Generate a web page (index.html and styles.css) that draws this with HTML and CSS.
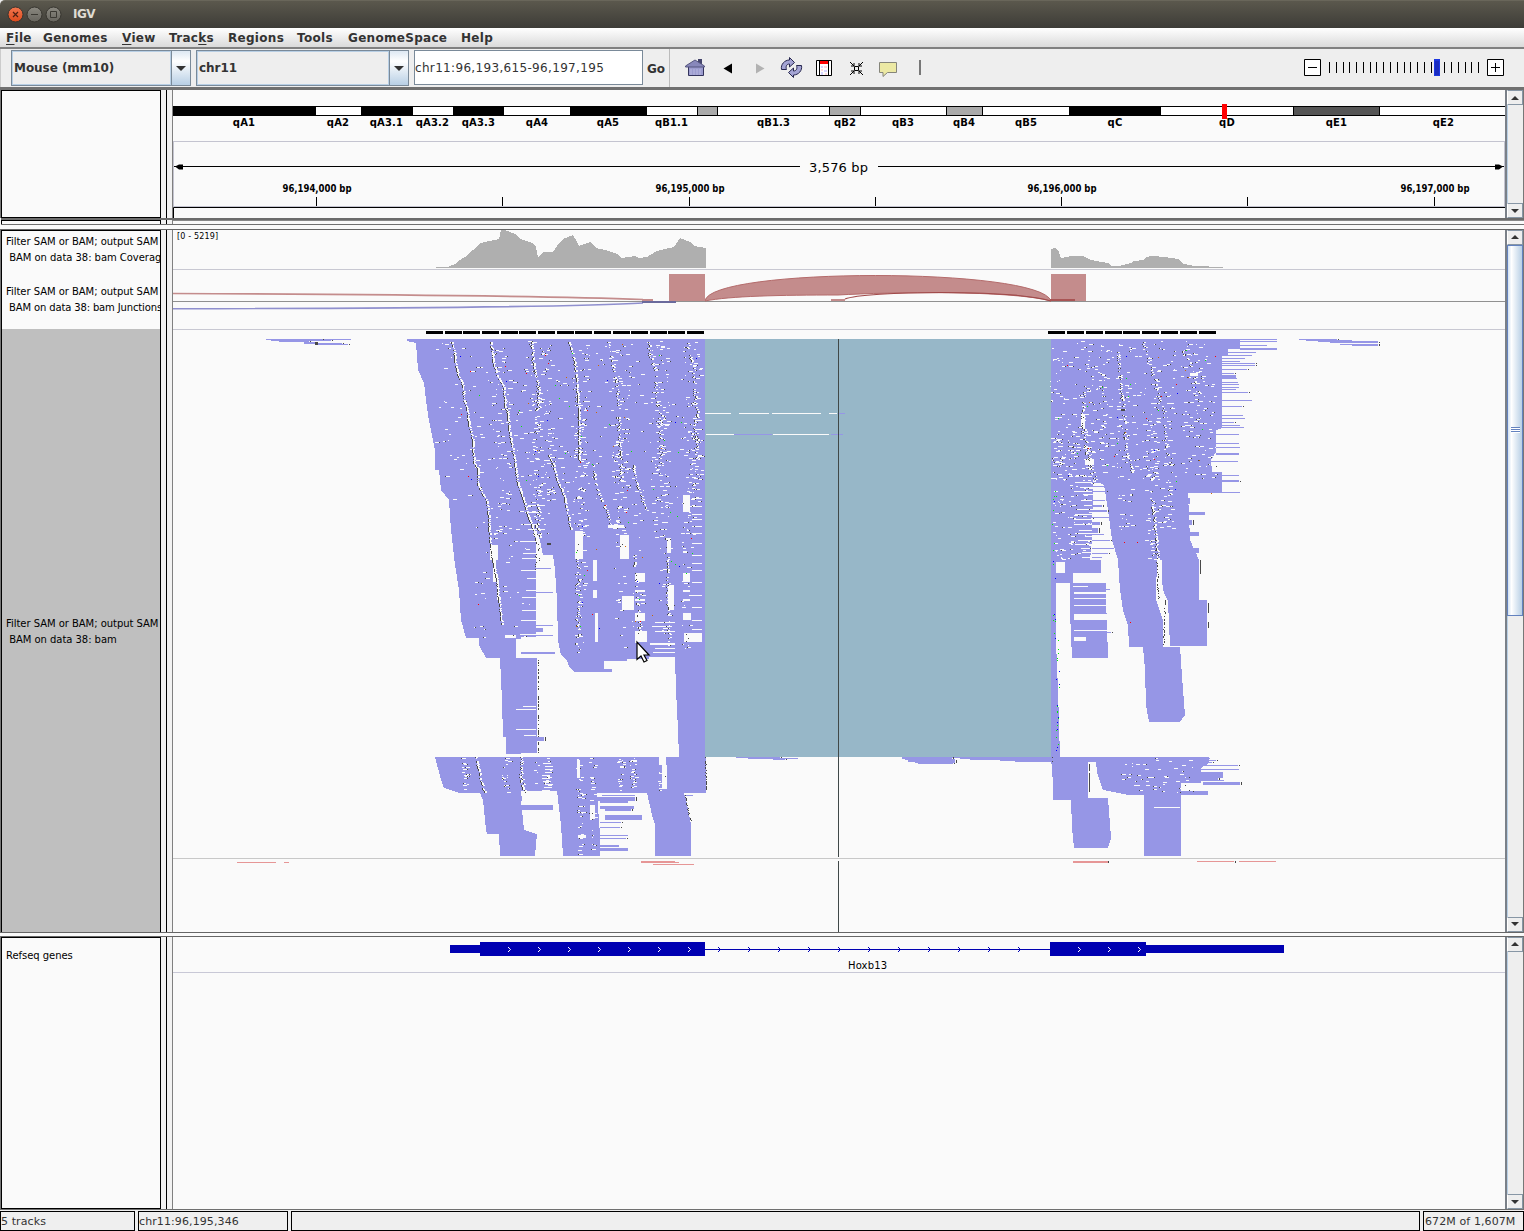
FILE: index.html
```html
<!DOCTYPE html>
<html lang="en">
<head>
<meta charset="utf-8">
<title>IGV</title>
<link rel="stylesheet" href="styles.css">
</head>
<body>
<header class="titlebar">
  <svg class="winbtns" width="66" height="28" viewBox="0 0 66 28">
    <defs><linearGradient id="o" x2="0" y2="1"><stop stop-color="#f3774f"/><stop offset="1" stop-color="#dc4a1c"/></linearGradient>
    <linearGradient id="g" x2="0" y2="1"><stop stop-color="#8b8981"/><stop offset="1" stop-color="#66645d"/></linearGradient></defs>
    <circle cx="15.5" cy="14.5" r="7.5" fill="url(#o)" stroke="#37342f"/>
    <path d="M13 12l5 5M18 12l-5 5" stroke="#4c2013" stroke-width="1.2"/>
    <circle cx="34.5" cy="14.5" r="7.5" fill="url(#g)" stroke="#37352f"/>
    <path d="M31 14.5h7" stroke="#3b3933"/>
    <circle cx="53.5" cy="14.5" r="7.5" fill="url(#g)" stroke="#37352f"/>
    <path d="M50.500 11.500h6v6h-6z" fill="none" stroke="#3b3933"/>
  </svg>
  <span class="title">IGV</span>
</header>
<nav class="menu">
  <span class="m1"><u>F</u>ile</span><span class="m2">Genomes</span><span class="m3"><u>V</u>iew</span><span class="m4">Trac<u>k</u>s</span><span class="m5">Regions</span><span class="m6">Tools</span><span class="m7">GenomeSpace</span><span>Help</span>
</nav>
<section class="toolbar">
  <div class="combo genome"><span>Mouse (mm10)</span><i><b></b></i></div>
  <div class="combo chrom"><span>chr11</span><i><b></b></i></div>
  <div class="locus">chr11:96,193,615-96,197,195</div>
  <div class="go">Go</div>
  <svg class="icons" width="270" height="38" viewBox="670 49 270 38">
    <path d="M688.500 66v9.500h15V66" fill="#9c9ccf" stroke="#33335c"/>
    <path d="M698 59h4v5h-4z" fill="#44446c"/>
    <path d="M685.500 66l9.500-6 9.500 6v1h-19z" fill="#8888bb" stroke="#55557e"/>
    <path d="M691 69v6M694 69v6M697 69v6M700 69v6" stroke="#b8b8df"/>
    <path d="M723.500 68.500l8.500-5v10z" fill="#000"/><path d="M764.500 68.500l-8.500-5v10z" fill="#b2b2b2"/>
    <g fill="#a4a4d4" stroke="#26264e"><path d="M781.500 69.500c-1-5 3-9.500 8-9.500v-2.500l5 5-5 4.500v-3c-3 0-4 2.500-3 5.500z"/><path d="M801.500 65.500c1 5-3 9.500-8 9.500v2.500l-5-5 5-4.500v3c3 0 4-2.500 3-5.500z"/></g>
    <path d="M816.500 60.500h15v15h-15z" fill="#fff" stroke="#000"/><path d="M819.500 60v16M828.500 60v16" stroke="#000"/><path d="M820 61h8v3h-8z" fill="red"/>
    <path d="M821 66h2v2h-2zM824 70h3v2h-3zM821 72h2v3h-2z" fill="#d7d4ff"/><path d="M824 66h3v2h-3zM821 69h2v2h-2zM825 73h2v2h-2z" fill="#ffd9df"/>
    <path d="M854.500 66.500h4v4h-4zM850 62l4 4v-3M854 66h-3M863 62l-4 4v-3M859 66h3M850 75l4-4v3M854 71h-3M863 75l-4-4v3M859 71h3" fill="none" stroke="#000"/>
    <path d="M879.500 62.500h17v10h-9l-4.500 4v-4h-3.500z" fill="#ece9a4" stroke="#85857a"/>
    <path d="M919 60h2v15h-2z" fill="#777"/>
  </svg>
  <svg class="zoom" width="220" height="38" viewBox="1304 49 220 38">
    <g fill="#fff" stroke="#000"><path d="M1304.500 59.500h16v16h-16zM1487.500 59.500h16v16h-16z"/><path d="M1308 67.500h9M1491 67.500h9M1495.500 63v9"/></g>
    <path id="ticks" stroke="#000"/>
    <path d="M1434 59h6v17h-6z" fill="#1d38e0"/><path d="M1435 61h4v14h-4z" fill="#1a2cc0"/>
  </svg>
</section>

<main>
  <section class="row head">
    <div class="names"></div><div class="split"></div>
    <svg class="view" width="1332" height="127" viewBox="173 91 1332 127">
      <g id="ideo"></g>
      <path d="M173 141.500h1332M173 206.500h1332M173.500 141v66M1504.500 141v66" stroke="#c4c4d0"/>
      <path d="M173.500 218v-10.500h1332" fill="none" stroke="#000"/>
      <path d="M174 166.500h626M878 166.500h626" stroke="#000"/><path d="M175 166.500l4-2h4v5h-4zM1503 166.500l-4-2h-4v5h4z"/>
      <text class="span" x="809" y="172" textLength="59">3,576 bp</text>
      <g id="ruler" class="ruler"></g>
    </svg>
    <div class="sb"><i class="up"></i><i class="track"></i><i class="dn"></i></div>
  </section>
  <div class="sliver"><div class="names"></div><div class="split"></div><div class="rest"></div></div>
  <section class="row data">
    <div class="names">
      <p class="n1">Filter SAM or BAM; output SAM<br>&nbsp;BAM on data 38: bam Coverag</p>
      <p class="n2">Filter SAM or BAM; output SAM<br><span class="tight">&nbsp;BAM on data 38: bam Junctions</span></p>
      <p class="n3">Filter SAM or BAM; output SAM<br>&nbsp;BAM on data 38: bam</p>
    </div><div class="split"></div>
    <svg class="view" width="1332" height="702" viewBox="173 230 1332 702" shape-rendering="crispEdges">
      <text class="range" x="177" y="239" textLength="41">[0 - 5219]</text>
      <path fill="#afafaf" d="M436 268V267H449V266L455 264 460 260 465 257 473 250 481 243 489 241 499 239 501 230H505L515 234 520 239 533 243 536 247 538 258 541 254 544 252H553L559 243 563 239 573 235 576 240 579 246 590 242 596 248 605 250 617 254 622 258 635 256 639 258 647 257 657 251 665 249 674 247 680 238 690 242 694 246 706 248V268z"/>
      <path fill="#afafaf" d="M1051 268V249L1055 248 1059 252 1061 258 1071 256H1083L1091 260 1108 263 1111 266H1119L1131 263 1134 261 1143 260 1146 257 1152 256 1165 257 1178 259 1184 264 1194 266 1223 267V268z"/>
      <path d="M173 269.500h1332M173 329.500h1332" stroke="#c8c8d2"/>
      <path d="M173 301.500h1332" stroke="#909090"/>
      <g shape-rendering="auto" fill="none">
        <path d="M173 293.500Q520 295 643 299.500" stroke="#c48c8c" stroke-width="1.6"/>
        <path d="M173 308.800Q560 308 643 303" stroke="#8f8fce" stroke-width="1.6"/>
        <path d="M705 301C709 267 1040 267 1051 301C1010 290 890 292 838 295C780 295 730 296 705 301z" fill="#c48c8c" stroke="#b46b6b"/>
        <path d="M845 299C865 291 1010 289 1051 301" stroke="#a04a4a" stroke-width="1.200"/>
      </g>
      <path d="M642 299h11v2h-11zM669 274h36v27h-36zM1051 274h35v27h-35zM831 299h14v2h-14z" fill="#c48c8c"/>
      <path d="M642 301h34v2h-34z" fill="#6a6a9c"/><path d="M1050 299h25v2h-25z" fill="#a95454"/>
      <path d="M426 332.500h278" stroke="#000" stroke-width="3" stroke-dasharray="17 1.650"/>
      <path d="M1048 332.500h168" stroke="#000" stroke-width="3" stroke-dasharray="17 1.850"/>
      <path d="M705 339h346v418H705z" fill="#97b7c8"/>
      <path id="reads" fill="#9696e6"/>
      <path id="gaps" fill="#fafafa"/><path id="bars" fill="#9696e6"/>
      <path id="marks" fill="#484848"/><g id="snps"></g>
      <path d="M705 413.500h26M739 413.500h30M772 413.500h49M829 413.500h8M706 434.500h28M773 434.500h56" stroke="#fafafa"/>
      <path d="M839 413.500h6M734 434.500h38M831 434.500h12" stroke="#9696e6"/>
      <path d="M173 858.500h1332" stroke="#c8c8c8"/>
      <path d="M237 862.500h39M284 862.500h5M641 861.500h34M641 862.500h38M653 864.500h41M1073 861.500h35M1073 862.500h35" stroke="#e69696"/>
      <path d="M1197 861.500h37M1239 861.500h37" stroke="#e69696"/>
      <path d="M1235 861h1v2h-1zM1108 861h1v2h-1z" fill="#484848"/>
      <path d="M838.500 339v518M838.500 861v71" stroke="#404848"/>
      <path d="M637 642v17.500l4-3.500 3 6 3-1.500-3-5.500h5z" fill="#fff" stroke="#000" stroke-width="1.200" shape-rendering="auto"/>
    </svg>
    <div class="sb"><i class="up"></i><i class="thumb"><b></b></i><i class="track"></i><i class="dn"></i></div>
  </section>
  <section class="row genes">
    <div class="names"><p class="n4">Refseq genes</p></div><div class="split"></div>
    <svg class="view" width="1332" height="271" viewBox="173 938 1332 271">
      <path d="M450 945h30v-3h225v14H480v-3h-30zM1050 942h96v3h138v8h-138v3h-96zM705 949h345v1H705z" fill="#0000b2"/>
      <path id="white" fill="none" stroke="#fff"/><path id="blue" fill="none" stroke="#0000b2"/>
      <text class="gene" x="848" y="969" textLength="39">Hoxb13</text>
      <path d="M173 972.500h1332" stroke="#c8c8d6"/>
    </svg>
    <div class="sb"><i class="up"></i><i class="track"></i><i class="dn"></i></div>
  </section>
</main>
<footer class="status"><div class="s1">5 tracks</div><div class="s2">chr11:96,195,346</div><div class="s3"></div><div class="s4">672M of 1,607M</div></footer>
<script src="tracks.js"></script>
</body>
</html>
```
FILE: styles.css
```css
* { box-sizing: border-box; }
body { margin: 0; width: 1524px; height: 1231px; overflow: hidden; display: flex; flex-direction: column; background: #eee; font-family: "DejaVu Sans", sans-serif; font-size: 12px; color: #333; }
svg { display: block; flex: none; }
i { display: block; font-style: normal; }
.titlebar { height: 28px; display: flex; background: linear-gradient(#5b584d, #3d3c37); border-top: 1px solid #69665a; border-radius: 5px 0 0 0; }
.winbtns { margin-top: -1px; }
.title { margin-left: 7px; line-height: 27px; font-weight: bold; font-size: 12px; letter-spacing: -.5px; color: #dfdbd2; }
.menu { height: 21px; display: flex; padding-left: 6px; background: linear-gradient(#fff, #dadada); border-bottom: 2px solid #808080; font-weight: bold; line-height: 20px; letter-spacing: .3px; white-space: nowrap; }
.menu span { flex: none; }
.menu u { text-underline-offset: 2px; }
.m1 { width: 37px; } .m2 { width: 79px; } .m3 { width: 47px; } .m4 { width: 59px; } .m5 { width: 69px; } .m6 { width: 51px; } .m7 { width: 113px; }
.toolbar { height: 38px; display: flex; border-left: 1px solid #ccc; }
.combo { display: flex; height: 36px; margin-top: 1px; border: 1px solid #7a8a99; font-weight: bold; line-height: 32px; letter-spacing: -.05px; }
.combo span { flex: 1; border: 1px solid #b8cfe5; padding-left: 1px; }
.combo i { width: 19px; border-left: 1px solid #7a8a99; background: linear-gradient(#dde8f3, #fff 30%, #b8cfe5); display: flex; align-items: center; justify-content: center; }
.combo b { border: 5px solid transparent; border-top-color: #333; border-bottom: 0; }
.genome { width: 180px; margin-left: 10px; }
.chrom { width: 213px; margin-left: 5px; }
.locus { width: 229px; height: 35px; margin: 1px 0 0 5px; border: 1px solid #7a8a99; background: #fff; padding-left: 0; line-height: 34px; letter-spacing: .33px; white-space: nowrap; }
.go { width: 27px; border-right: 1px solid #bbb; padding-left: 4px; line-height: 40px; font-weight: bold; }
.zoom { margin-left: auto; }
main { border-top: 3px solid #707070; height: 1123px; display: flex; flex-direction: column; background: #fafafa; }
.row { display: flex; border-left: 1px solid #777; border-right: 1px solid #777; }
.names { width: 160px; flex: none; border: 1px solid #000; background: #fafafa; overflow: hidden; color: #000; font-size: 10px; line-height: 16px; white-space: nowrap; letter-spacing: -.04px; }
.names p { margin: 0; padding-left: 4px; }
.split { width: 12px; flex: none; background: linear-gradient(#000, #000) 5px 0 / 1px 100% no-repeat #f2f2f2; border-right: 1px solid #808080; }
.head { height: 128px; }
.head .view, .genes .view { margin-top: 1px; }
.sliver { height: 7px; display: flex; border-top: 2px solid #6c6c6c; border-bottom: 1px solid #707070; margin-left: 1px; }
.sliver .names { border-bottom: 0; }
.rest { flex: 1; border-top: 1px solid #888; }
.data { height: 704px; margin-top: 4px; border-top: 1px solid #666; border-bottom: 1px solid #666; }
.data .names { border-bottom: 0; background: linear-gradient(#fafafa 98px, #bfbfbf 98px); }
.n1 { padding-top: 3px; } .n2 { padding-top: 18px; } .n3 { padding-top: 300px; }
.tight { letter-spacing: -.14px; }
.genes { margin-top: 3px; height: 275px; border-top: 1px solid #666; border-bottom: 1px solid #707070; }
.n4 { padding-top: 10px; }
.sb { width: 18px; border-left: 2px solid #7a8088; display: flex; flex-direction: column; background: #eee; }
.up, .dn { height: 15px; flex: none; border: 1px solid #8796a5; border-left-color: #fff; display: flex; align-items: center; justify-content: center; }
.up::after { content: ""; border: 4px solid transparent; border-top: 0; border-bottom-color: #333; }
.dn::after { content: ""; border: 4px solid transparent; border-bottom: 0; border-top-color: #333; }
.track { flex: 1; border-left: 1px solid #b8cfe5; }
.thumb { height: 371px; border: 1px solid #6382bf; background: linear-gradient(90deg, #d2e1f1, #fff 25%, #b8cfe5); display: flex; align-items: center; justify-content: center; }
.thumb b { width: 9px; height: 6px; background: repeating-linear-gradient(#6382bf 0 1px, #fff 1px 2px); }
.status { height: 20px; margin-top: 1px; flex: none; display: flex; gap: 3px; font-size: 11px; letter-spacing: .1px; line-height: 19px; white-space: nowrap; }
.status div { border: 1px solid #000; background: #efefef; }
.s1 { width: 135px; } .s2 { width: 150px; } .s3 { flex: 1; } .s4 { width: 101px; padding-left: 1px; }
svg text { font-family: "DejaVu Sans", sans-serif; fill: #000; }
.span { font-size: 13px; }
.ruler text { font-size: 10px; font-weight: bold; }
.band { font-size: 10px; font-weight: bold; text-anchor: middle; letter-spacing: .15px; }
.range { font-size: 8px; }
.gene { font-size: 10px; }
```
FILE: tracks.js
```js
const $ = id => document.getElementById(id);
let seed = 12345;
const rnd = () => (seed = (seed * 16807) % 2147483647) / 2147483647;
const r = (x, y, w, h) => `M${Math.round(x)} ${Math.round(y)}h${Math.round(w)}v${Math.round(h)}h${-Math.round(w)}z`;

// zoom slider ticks
$('ticks').setAttribute('d', Array.from({ length: 23 }, (_, i) => `M${Math.round(1329 + i * 6.78) + .5} 62v11`).join(''));

// cytobands: start, end, colour, name, label centre
const bands = [[173,316,'#000','qA1',244],[316,361,'#fff','qA2',338],[361,413,'#000','qA3.1',386.5],[413,453,'#fff','qA3.2',432.500],[453,504,'#000','qA3.3',478.500],[504,570,'#fff','qA4',537],[570,647,'#000','qA5',608],[647,697,'#fff','qB1.1',671.500],[697,718,'#aaa'],[718,829,'#fff','qB1.3',773.500],[829,861,'#aaa','qB2',845],[861,946,'#fff','qB3',903],[946,983,'#aaa','qB4',964],[983,1069,'#fff','qB5',1026],[1069,1161,'#000','qC',1115],[1161,1293,'#fff','qD',1227],[1293,1380,'#555','qE1',1336.500],[1380,1510,'#fff','qE2',1443.500]];
$('ideo').innerHTML = bands.map(([a, b, c, n, x]) => `<rect x="${c === '#fff' ? a - .5 : a + .5}" y="106.500" width="${c === '#fff' ? b - a + 1 : b - a - 1}" height="9" fill="${c}" stroke="#000"/>` + (n ? `<text class="band" x="${x}" y="126">${n}</text>` : '')).join('') + '<path d="M1222 104h5v15h-5z" fill="red"/>';

// genome ruler
$('ruler').innerHTML = [316, 502, 689, 875, 1061, 1247, 1434].map((x, i) => `<path d="M${x}.5 197v9" stroke="#000"/>` + (i % 2 ? '' : `<text x="${x - 33.5}" y="192" textLength="69" lengthAdjust="spacingAndGlyphs">96,19${4 + i / 2},000 bp</text>`)).join('');

// aligned read blocks
$('reads').setAttribute('d',
  'M407 339H705V757H679L678 730 676 690 675 657H649V659H627V661H604V669H612V672H575L570 668 567 661 561 655 558 640 557 600 555 570 553 555H543L540 540 536 530V637H521V658H537V753L506 754V737H503L502 700 500 658H486L479 645V638H466L461 620 459 590 455 565 451 530 449 500 441 490 439 470H435V450L431 430 428 415 426 400 424 383 418 370 416 343 407 341z' +
  'M1051 339H1240V349H1228V356H1222V428L1216 430V452L1211 460 1212 472H1222V493H1188L1190 540 1199 560 1199 600H1207V646H1170L1168 602 1163 590 1160 560 1157 555 1156 600 1163 620V647H1180L1183 690 1185 715 1180 722H1149L1146 705 1145 670 1143 647H1129L1128 625 1123 610 1120 590 1118 560 1112 540 1108 510 1104 485 1093 480 1092 540 1090 560H1101V573H1073V583H1106V613H1107V642H1108V658H1072L1070 613V583H1056V642L1058 690 1060 757H1051z' +
  'M435 757H706V793H684L686 800 691 824V856H655V825L652 815 647 793H597L600 835V856H563L561 825 557 791H521V800L524 830 537 834 535 856H500L499 834H487L486 830 483 800 480 793H460L444 788 441 780z' +
  'M1051 757H1209V763L1201 768V783H1181V856H1144V795H1129L1103 790 1097 772 1096 762H1088V798H1108L1111 838 1108 848H1074L1072 828 1071 800H1053V783z');

let gaps = '', bars = '', marks = '';
const dash = (x, y) => {
  x = Math.round(x);
  const w = 1 + Math.floor(rnd() * 4), side = rnd() < .5;
  if (x < 705 && x + w > 704) return;
  gaps += r(x, y, w, 1);
  if (rnd() < .4) marks += r(side ? x - 1 : x + w, y, 1, 1);
};
// boundaries between neighbouring stacks of reads
const seam = (pts, density, spread) => {
  for (let k = 0; k < pts.length - 1; k++) {
    const [x0, y0] = pts[k], [x1, y1] = pts[k + 1];
    for (let y = y0; y < y1; y++) {
      if (rnd() > density) continue;
      const x = x0 + (x1 - x0) * (y - y0) / (y1 - y0) + (rnd() - .5) * spread;
      gaps += r(x + 1, y, 1 + rnd() * 1.4, 1);
      if (rnd() < .8) marks += r(x, y, 1, 1);
    }
  }
};
seam([[451,342],[453,350],[454,360],[455,365],[457,375],[462,385],[463,400],[466,408],[468,425],[472,440],[473,463],[477,468],[477,485],[486,502],[488,520],[489,540],[492,560],[496,580],[498,600],[501,625]], .85, .5);
seam([[490,342],[492,360],[496,375],[500,382],[503,388],[504,405],[507,415],[509,435],[513,455],[516,480],[522,498],[527,515],[531,525],[537,545]], .9, .5);
seam([[530,342],[532,358],[534,370],[537,385],[538,410]], .75, 2);
seam([[548,455],[552,463],[556,480],[563,495],[565,505],[570,530]], .8, 1);
seam([[568,342],[572,355],[575,370],[576,388],[578,410],[578,460]], .8, .8);
seam([[607,342],[612,365],[616,385],[618,425],[620,480]], .5, 2);
seam([[592,465],[596,490],[605,510],[611,525]], .6, 2);
seam([[647,342],[654,375],[659,430],[661,466]], .4, 3);
seam([[632,465],[636,485],[646,512]], .6, 2);
seam([[686,342],[692,370],[695,397],[696,460]], .5, 4);
seam([[537,500],[537,570]], .5, 5);
seam([[1117,352],[1122,405],[1125,450],[1132,473]], .5, 2);
seam([[1143,342],[1164,415],[1165,445],[1172,473]], .4, 3);
seam([[1082,392],[1082,428],[1087,460],[1096,485]], .6, 4);
seam([[1151,500],[1157,555],[1158,600]], .7, 2);
seam([[475,757],[480,780],[484,793]], .8, 1);
seam([[521,757],[520,777],[524,793]], .8, 3);
seam([[1182,350],[1190,367],[1200,395]], .35, 3);
seam([[1165,600],[1163,646]], .8, 1);
seam([[705,757],[706,790]], .8, 1);
seam([[685,795],[691,824]], .8, 1);
seam([[538,660],[538,753]], .7, 1);
seam([[577,540],[577,655]], .4, 4);
seam([[633,555],[640,640]], .4, 3);
seam([[666,530],[668,640]], .5, 2);
// scattered gaps, thickest in the vertical lanes where stacks meet
const scatter = (lanes, y0, y1, n, spread) => {
  for (let i = 0; i < n; i++) dash(lanes[Math.floor(rnd() * lanes.length)] + (rnd() - .5) * spread, y0 + rnd() * (y1 - y0));
};
scatter([500,540,580,620,660,692], 341, 540, 420, 18);
scatter([455,495,535,565,605,640,675], 341, 500, 260, 40);
scatter([537,550,579,618,660,694], 400, 500, 170, 10);
scatter([580,620,637,665,686], 500, 650, 150, 10);
scatter([480,510,525], 500, 640, 36, 14);
scatter([1060,1082,1097,1110,1127,1148,1165,1190,1205], 341, 480, 480, 20);
scatter([1058,1073,1087,1150], 430, 560, 210, 10);
scatter([1125,1165], 480, 530, 50, 16);
scatter([464,505,535,548,579,592,620,632,660], 758, 792, 130, 6);
scatter([580,592], 793, 855, 40, 5);
scatter([1130,1150,1172,1185], 758, 792, 50, 20);

// larger unfilled areas
[[490,545,8,15],[493,560,3,22],[497,582,2,18],[505,635,11,3],[516,639,20,19],[575,531,8,28],[593,560,4,21],[593,590,4,8],[595,613,3,29],[620,535,9,24],[622,596,12,14],[635,573,10,9],[635,590,10,2],[635,599,10,2],[635,613,10,8],[635,631,12,11],[683,573,7,9],[683,590,7,2],[683,599,7,2],[683,613,8,7],[684,633,18,9],[667,538,4,15],[668,585,6,25],[683,495,7,17],[608,525,16,3],[655,622,20,1],[652,626,20,1],[655,631,20,1],[650,643,25,2],[655,648,20,1],[653,652,22,1],[1081,414,4,14],[1190,373,8,3],[1085,459,9,6],[1056,562,9,11],[1057,594,13,3],[1058,605,12,8],[1058,620,12,9],[1058,633,12,7],[1073,586,15,1],[1074,592,32,2],[1074,598,32,1],[1074,605,32,1],[1074,614,34,6],[1074,630,34,1],[1074,637,12,4],[1158,560,4,17],[1158,579,4,10],[1164,603,4,26],[1165,630,4,16],[659,757,7,8],[662,765,5,24],[577,760,3,18],[1090,762,6,36],[590,805,5,14],[578,835,8,3]].forEach(g => gaps += r(...g));
for (let y = 505; y < 640; y += 5 + Math.floor(rnd() * 9)) gaps += r(519 + rnd() * 10, y, 17, 1);
for (let y = 498; y < 642; y += 5 + Math.floor(rnd() * 9)) gaps += r(692, y, 10, 1);
for (let y = 763; y < 793; y += 3) gaps += r(542 + rnd() * 3, y, 8, 1);
for (let y = 482; y < 560; y += 3 + Math.floor(rnd() * 4)) gaps += r(1073 + rnd() * 12, y, 20, 1);
gaps += r(523,706,13,1) + r(516,709,20,1) + r(516,729,20,1) + r(524,735,12,1) + r(1154,807,26,1);

// single reads reaching past the blocks
[[266,339,56,1],[271,340,60,1],[279,341,30,1],[304,342,14,1],[315,339,36,1],[304,343,38,1],[318,344,30,1],[1299,339,38,1],[1306,340,46,1],[1318,341,60,1],[1330,342,48,1],[1340,344,38,1],[1352,345,26,1],
[1240,339,37,1],[1240,341,37,1],[1240,345,27,1],[1240,348,37,2],[1222,352,34,1],[1222,355,30,1],[1222,358,23,1],[1222,361,18,1],[1222,363,33,1],[1222,365,33,1],[1222,369,25,1],[1222,373,12,1],[1222,375,14,3],[1222,378,15,1],[1222,382,16,1],[1222,384,17,1],[1222,387,17,1],[1222,389,14,1],[1222,392,26,1],[1222,400,30,1],[1222,406,20,1],[1222,415,21,1],[1222,418,23,1],[1222,422,12,1],[1222,425,18,1],[1222,427,22,1],[1216,434,23,1],[1216,443,23,1],[1216,447,24,1],[1216,453,23,2],[1211,461,27,1],[1211,475,28,1],[1211,481,28,1],[1222,480,17,1],[1187,492,53,1],[1187,498,3,6],[1187,512,18,3],[1188,520,4,5],[1190,532,9,4],[1190,548,9,5],
[536,568,15,1],[536,592,17,1],[521,625,32,1],[521,628,22,4],[521,635,32,1],[521,652,34,2],[537,737,7,4],[1092,482,12,1],[1092,486,13,1],[1092,491,14,1],[1092,500,13,1],[1092,505,10,2],[1092,510,15,2],[1092,517,18,1],[1092,522,8,3],[1092,528,6,5],[1092,534,12,1],[1092,540,18,1],[1092,548,22,1],[1092,553,16,1],[1092,557,10,1],[1100,589,10,1],[1100,632,11,1],
[516,805,37,5],[521,796,1,5],[602,795,33,1],[597,797,38,4],[600,801,28,2],[600,806,34,3],[605,809,26,2],[605,815,37,5],[600,822,21,1],[600,827,20,1],[600,835,28,1],[600,838,26,1],[600,845,19,2],[600,848,28,3],[680,795,13,1],[736,757,44,1],[748,758,50,1],[773,759,12,1],[902,757,50,2],[905,759,50,1],[908,760,47,2],[915,762,40,1],[918,763,35,1],[950,757,101,1],[960,758,91,1],[970,759,81,1],[1000,760,51,1],[1015,761,36,1],[1201,758,9,1],[1201,760,15,1],[1201,762,11,1],[1201,765,37,1],[1201,769,38,1],[1186,772,37,6],[1190,780,34,1],[1178,778,40,2],[1203,782,37,3],[1178,791,30,4],[1170,788,10,2]].forEach(b => {
  bars += r(...b);
  if (rnd() < .4) marks += r(b[0] + b[2] + 1, b[1], 1, b[3]);
});
marks += r(547,543,4,2) + r(315,342,3,3) + r(1121,409,4,2) + r(1089,764,1,7) + r(1089,773,1,19) + r(1200,560,1,14) + r(1208,603,1,10) + r(1208,622,1,6);
$('gaps').setAttribute('d', gaps);
$('bars').setAttribute('d', bars);
$('marks').setAttribute('d', marks);

// mismatched bases
let snps = '';
const colours = ['#f00', '#00f', '#0e0', '#c60', '#0e0'];
const spot = (x, y, c) => snps += `<path d="${r(x, y, 1, 1)}" fill="${c}"/>`;
for (let i = 0; i < 45; i++) spot(460 + rnd() * 240, 343 + rnd() * 150, colours[i % 5]);
for (let i = 0; i < 30; i++) spot(570 + rnd() * 130, 500 + rnd() * 130, colours[i % 5]);
for (let i = 0; i < 35; i++) spot(1055 + rnd() * 160, 343 + rnd() * 150, colours[i % 5]);
for (let i = 0; i < 20; i++) spot(1052 + rnd() * 4, 480 + rnd() * 160, i % 3 ? '#0e0' : '#00f');
for (let i = 0; i < 25; i++) spot(1056 + rnd() * 3, 640 + rnd() * 116, i % 3 ? '#0e0' : '#00f');
[[468,476],[478,604],[1176,384],[1124,542],[1137,542],[1130,622]].forEach(p => spot(...p, '#f00'));
$('snps').innerHTML = snps;

// strand arrows
const arrows = xs => xs.map(x => `M${x} 947l2.500 2.500-2.500 2.500`).join('');
$('white').setAttribute('d', arrows([508, 538, 568, 598, 628, 658, 688, 1078, 1108, 1138]));
$('blue').setAttribute('d', arrows([718, 748, 778, 808, 838, 868, 898, 928, 958, 988, 1018]));
```
